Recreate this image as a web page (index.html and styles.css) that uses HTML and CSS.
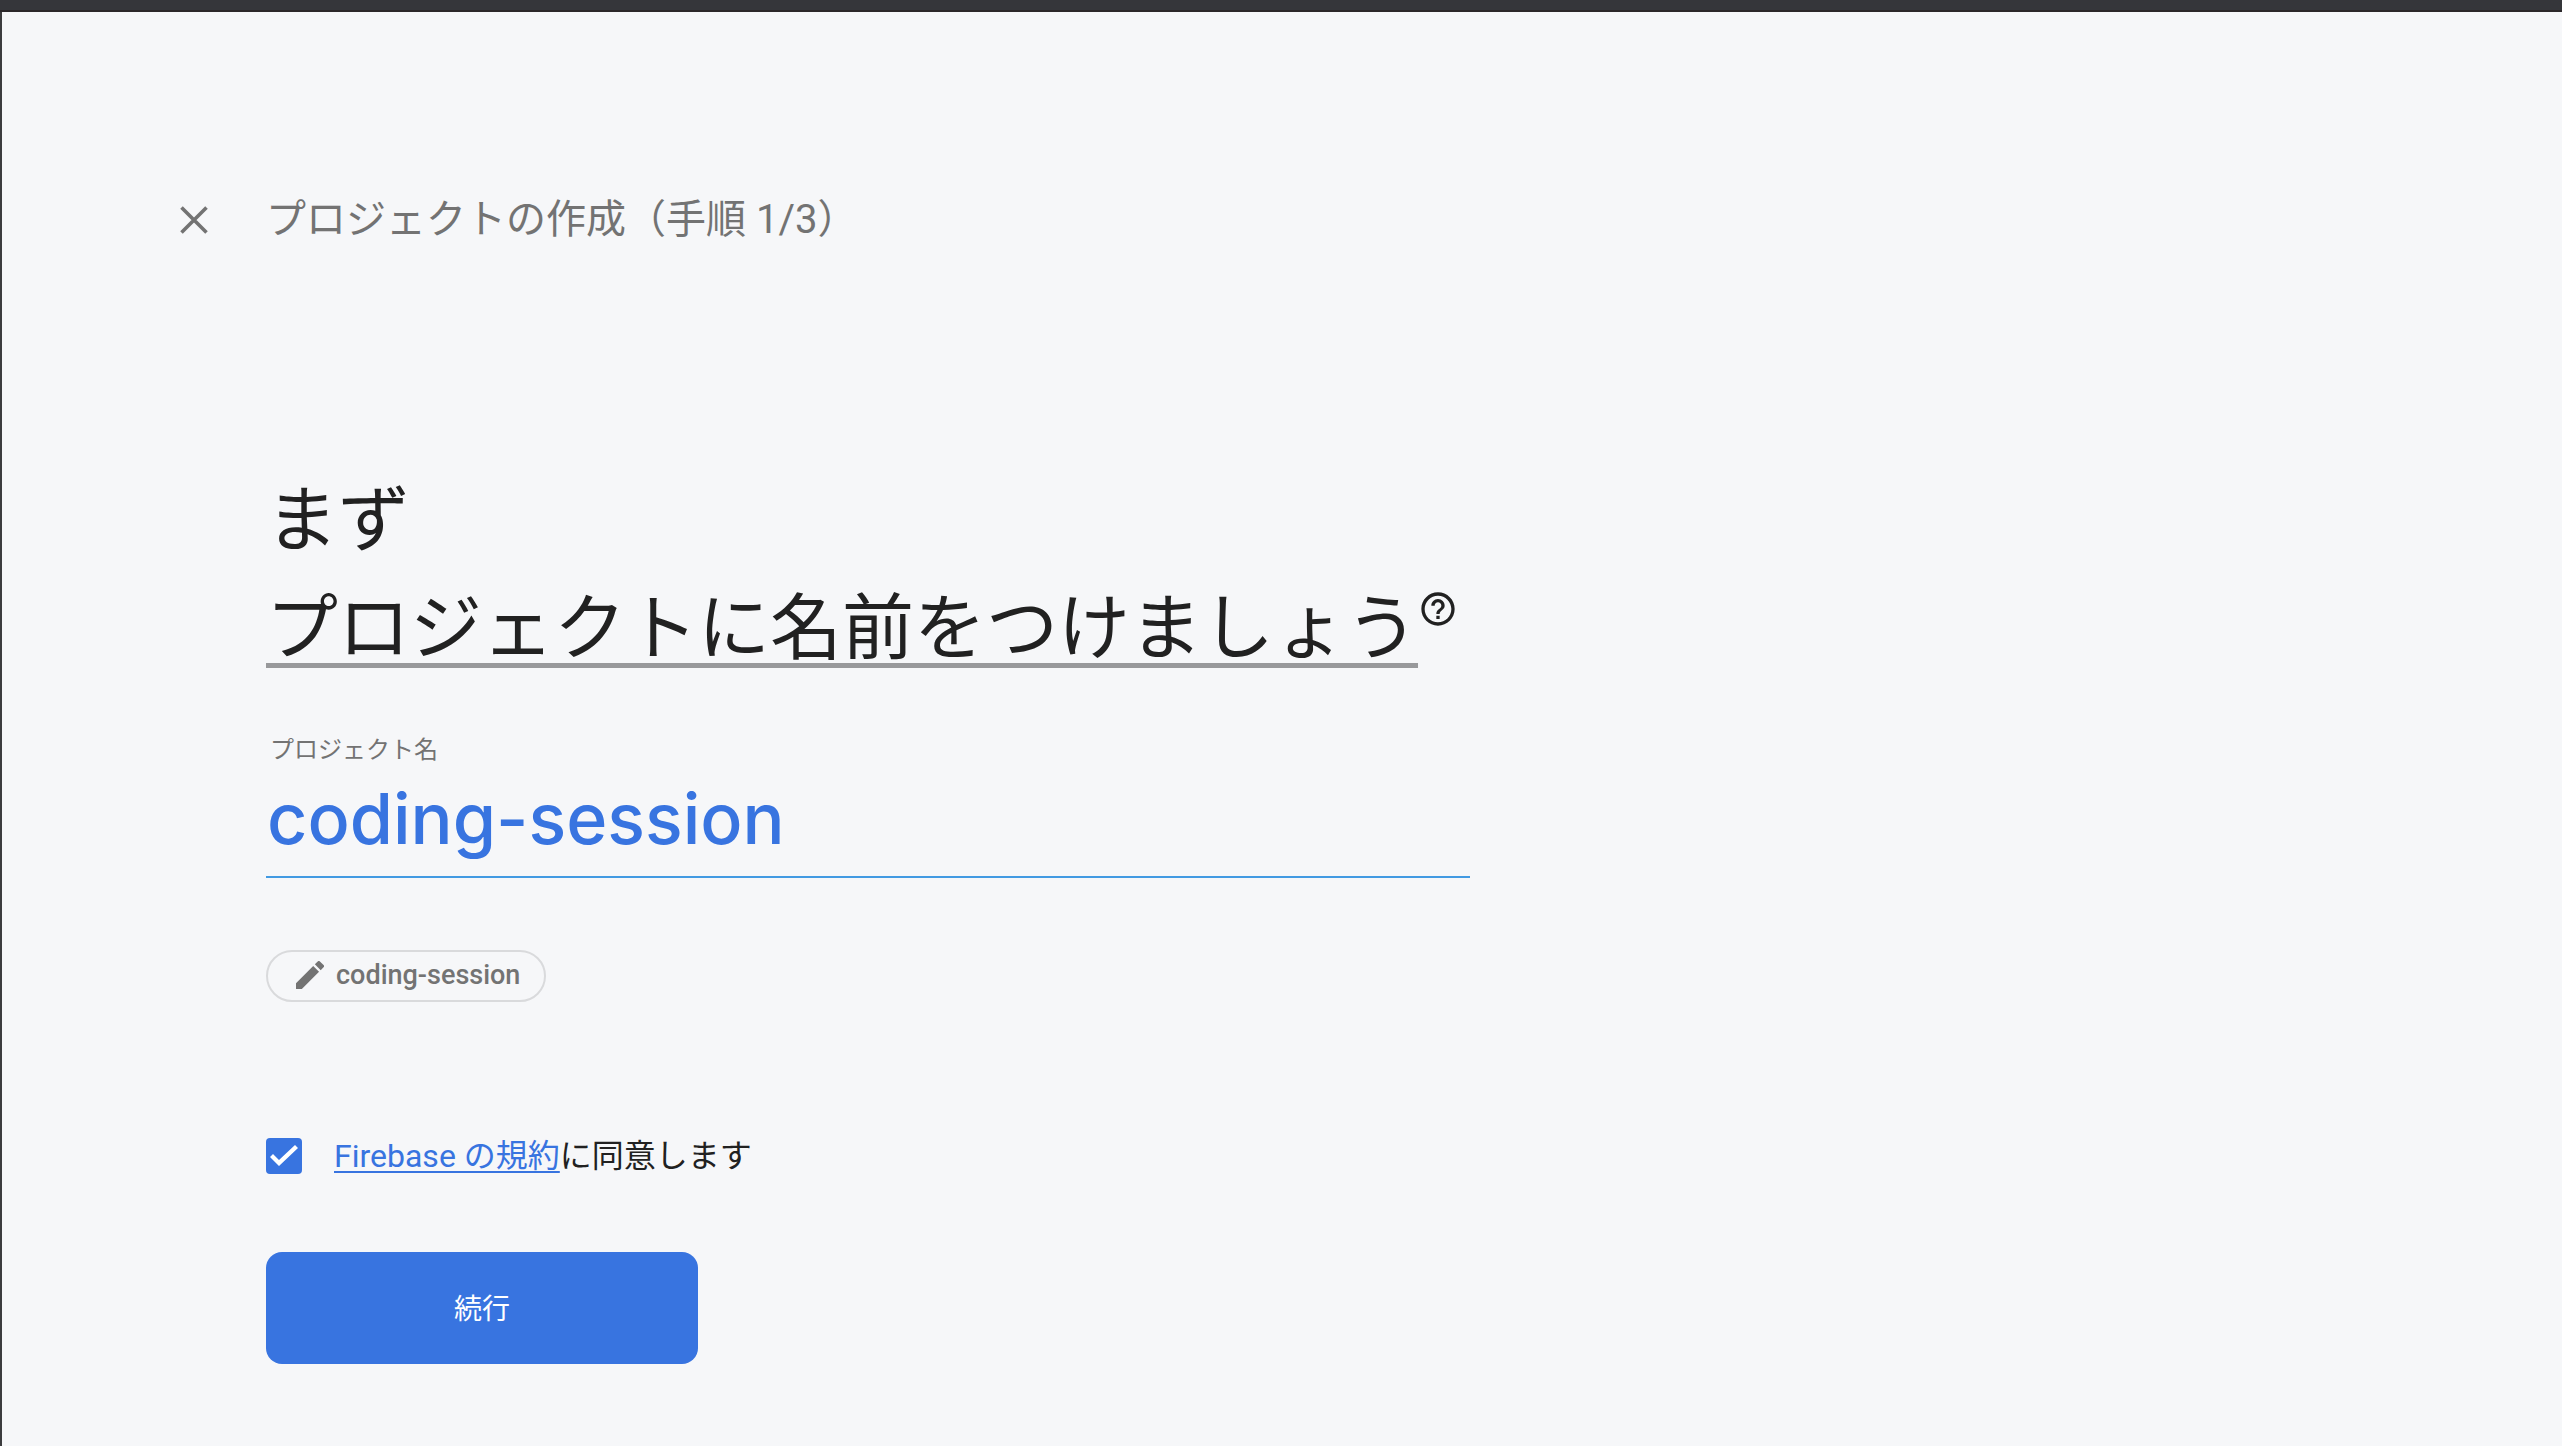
FILE: index.html
```html
<!DOCTYPE html>
<html lang="ja">
<head>
<meta charset="utf-8">
<meta name="viewport" content="width=device-width, initial-scale=1">
<title>プロジェクトの作成</title>
<link rel="stylesheet" href="styles.css">
</head>
<body>
<div class="topbar"></div>
<div class="page">
  <header class="header">
    <button class="close" type="button" aria-label="閉じる">
      <svg class="close-icon" viewBox="0 0 28 28" aria-hidden="true"><path d="M1.500 1.500l25 25M26.500 1.500l-25 25" fill="none" stroke="currentColor" stroke-width="3.600"/></svg>
    </button>
    <h1 class="step">プロジェクトの作成（手順 1/3）</h1>
  </header>
  <main>
    <form class="form">
      <h2 class="title">まず<br><span class="term">プロジェクトに名前をつけましょう</span><button class="help" type="button" aria-label="ヘルプ"><svg class="help-icon" viewBox="0 0 24 24" aria-hidden="true"><path fill="currentColor" d="M11 18h2v-2h-2v2zm1-16C6.480 2 2 6.480 2 12s4.480 10 10 10 10-4.480 10-10S17.520 2 12 2zm0 18c-4.410 0-8-3.590-8-8s3.590-8 8-8 8 3.590 8 8-3.590 8-8 8zm0-14c-2.210 0-4 1.790-4 4h2c0-1.100.9-2 2-2s2 .9 2 2c0 2-3 1.750-3 5h2c0-2.250 3-2.500 3-5 0-2.210-1.790-4-4-4z"/></svg></button></h2>
      <label class="field-label" for="project-name">プロジェクト名</label>
      <input class="field" id="project-name" type="text" value="coding-session" spellcheck="false" autocomplete="off">
      <button class="chip" type="button">
        <svg class="chip-icon" viewBox="3 3 18 18" aria-hidden="true"><path fill="currentColor" d="M3 17.250V21h3.750L17.810 9.940l-3.750-3.750L3 17.250zM20.710 7.040a1 1 0 0 0 0-1.410l-2.340-2.340a1 1 0 0 0-1.410 0l-1.830 1.830 3.750 3.750 1.830-1.830z"/></svg>
        <span>coding-session</span>
      </button>
      <div class="terms">
        <input class="checkbox" id="agree" type="checkbox" checked>
        <label for="agree"><a class="link" href="#terms">Firebase の規約</a>に同意します</label>
      </div>
      <button class="submit" type="submit">続行</button>
    </form>
  </main>
</div>
</body>
</html>
```
FILE: styles.css
```css
* { box-sizing: border-box; }

body {
  display: flex;
  flex-direction: column;
  min-height: 100vh;
  margin: 0;
  background: #f6f7f9;
  color: #212121;
  font-family: Roboto, "Noto Sans CJK JP", sans-serif;
}

button, input { font-family: inherit; }

button {
  padding: 0;
  border: 0;
  background: none;
  color: inherit;
  cursor: pointer;
}

.topbar {
  height: 12px;
  background: #35363a;
  border-bottom: 2px solid #2b272a;
}

.page {
  flex: 1;
  padding: 178px 64px 80px 178px;
  border-left: 2px solid #3c3c3e;
}

.header {
  display: flex;
  align-items: center;
  gap: 58px;
  color: #737373;
}

.close { display: flex; }

.close-icon { width: 28px; height: 28px; }

.step {
  margin: 0;
  font-size: 40px;
  font-weight: 400;
  line-height: 60px;
}

.form {
  display: flex;
  flex-direction: column;
  align-items: flex-start;
  max-width: 1290px;
  margin-top: 217px;
  padding-left: 86px;
}

.title {
  margin: 0;
  font-size: 72px;
  font-weight: 400;
  line-height: 108px;
}

.term {
  text-decoration: underline;
  text-decoration-color: #98999b;
  text-decoration-thickness: 5px;
  text-underline-offset: 10px;
  text-decoration-skip-ink: none;
}

.help {
  vertical-align: 24px;
}

.help-icon { display: block; width: 40px; height: 40px; }

.field-label {
  margin-top: 49px;
  padding-left: 4px;
  color: #737373;
  font-size: 24px;
  line-height: 36px;
}

.field {
  width: 100%;
  height: 110px;
  padding: 0 0 8px 1px;
  border: 0;
  border-bottom: 2px solid #429ae2;
  outline: 0;
  background: none;
  color: #3874e0;
  font-family: Inter, sans-serif;
  font-size: 70px;
  font-weight: 500;
}

.chip {
  display: flex;
  align-items: center;
  gap: 12px;
  height: 52px;
  margin-top: 72px;
  padding: 0 24px 2px 28px;
  border: 2px solid #d9dadc;
  border-radius: 26px;
  color: #737373;
  font-size: 27px;
  font-weight: 500;
}

.chip-icon { width: 28px; height: 28px; }

.terms {
  display: flex;
  align-items: center;
  gap: 32px;
  margin-top: 130px;
  font-size: 32px;
  line-height: 48px;
}

.checkbox {
  appearance: none;
  display: grid;
  place-items: center;
  width: 36px;
  height: 36px;
  margin: 0;
  border-radius: 4px;
  background: #3874e0;
}

.checkbox:checked::before {
  content: "";
  width: 28px;
  height: 22px;
  background: #fff;
  clip-path: polygon(0 12px, 3px 9px, 9px 15px, 25px 0, 28px 3px, 9px 21px);
}

.link {
  color: #3874e0;
  text-decoration-thickness: 2px;
  text-underline-offset: 4px;
  text-decoration-skip-ink: none;
}

.submit {
  width: 432px;
  height: 112px;
  margin-top: 72px;
  padding-bottom: 2px;
  border-radius: 16px;
  background: #3874e0;
  color: #fff;
  font-size: 28px;
}
```
